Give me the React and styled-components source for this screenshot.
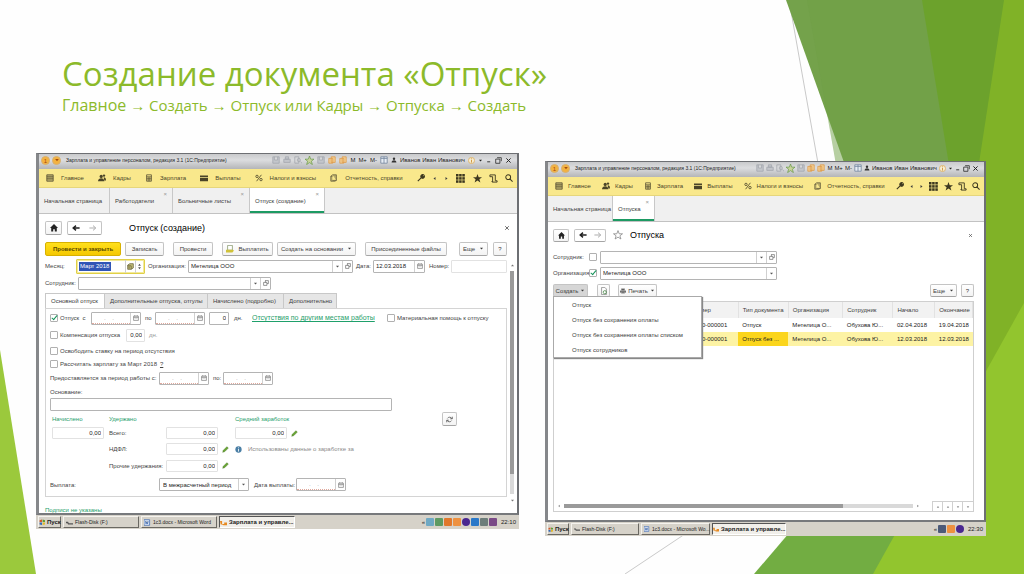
import React from "react";
import styled, { createGlobalStyle, css } from "styled-components";

const Global = createGlobalStyle`
  *, *::before, *::after { box-sizing: border-box; }
  html, body { margin: 0; padding: 0; background: #fff; }
  body { font-family: "Liberation Sans", Arial, sans-serif; }
  button, input, select { font: inherit; color: inherit; margin: 0; padding: 0; border: 0; background: none; border-radius: 0; outline: 0; }
`;

/* ---------- slide ---------- */
const Slide = styled.main`
  position: relative;
  min-height: 100vh;
  overflow: hidden;
  background: #fefefe;
`;
const Backdrop = styled.svg`
  position: absolute;
  inset: 0;
  width: 100%;
  height: 100%;
`;
const Header = styled.header`
  position: relative;
  height: 153px;
  padding: 54px 0 0 62px;
  color: #8cba2a;
  font-family: "Open Sans", "Noto Sans", sans-serif;
  white-space: nowrap;
`;
const Title = styled.h1`
  margin: 0;
  font-size: 33px;
  line-height: 40px;
  font-weight: 400;
`;
const Subtitle = styled.p`
  margin: 0;
  font-size: 15px;
  line-height: 22px;
`;
const Lead = styled.span`
  font-size: 16px;
`;
const Shots = styled.div`
  position: relative;
  display: flex;
  align-items: flex-start;
  gap: 26px;
  padding: 0 38px 0 36px;
`;

/* ---------- application window ---------- */
const Shot = styled.section`
  flex: ${(p) => p.$grow} 1 0;
  min-width: 0;
  margin-top: ${(p) => p.$drop || 0}px;
  font-size: 6px;
  line-height: 8px;
  color: #3c3c3c;
  white-space: nowrap;
`;
const Frame = styled.div`
  border: 1px solid #6d6f73;
  border-left: 3px solid #85878a;
  border-right: 2px solid #6d6f73;
  border-bottom: 2px solid #77797c;
  background: #fff;
`;
const TitleBar = styled.div`
  display: flex;
  align-items: center;
  height: 15px;
  padding: 0 5px 3px 2px;
  background: linear-gradient(#c9cacc, #dcdddf 40%, #b4b5b8);
  color: #222;
`;
const Caption = styled.span`
  flex: 1;
  min-width: 0;
  margin-left: 3px;
  font-size: 5px;
`;
const Disc = styled.span`
  display: grid;
  place-items: center;
  width: 9px;
  height: 9px;
  margin-right: 2px;
  border-radius: 50%;
  background: #f3b23f;
  border: 1px solid #d8b070;
  color: #a34a10;
`;
const Tools = styled.div`
  display: flex;
  align-items: center;
  gap: ${(p) => p.$gap}px;
  flex: none;
`;
const NavBar = styled.nav`
  display: flex;
  align-items: center;
  gap: ${(p) => p.$gap}px;
  height: 19px;
  padding: 0 4px 0 7px;
  background: #f9e88c;
  border-bottom: 1px solid #e6d67c;
`;
const NavItem = styled.a`
  display: flex;
  align-items: center;
  gap: ${(p) => p.$gap}px;
  color: #4b4529;
  text-decoration: none;
`;
const NavTools = styled.div`
  display: flex;
  flex: 1;
  align-items: center;
  justify-content: space-between;
`;
const TabBar = styled.div`
  display: flex;
  height: 26px;
  background: #f0f0f0;
  border-bottom: 1px solid #c2c2c2;
`;
const Tab = styled.button`
  position: relative;
  width: ${(p) => p.$w}px;
  padding-left: 5px;
  text-align: left;
  border-right: 1px solid #c8c8c8;
  ${(p) =>
    p.$active &&
    css`
      background: #fff;
      box-shadow: inset 0 -2px #1d9a63;
    `}
`;
const TabClose = styled.span`
  position: absolute;
  top: 3px;
  right: 5px;
  line-height: 6px;
  color: #999;
`;
const Body = styled.div`
  display: flex;
  flex-direction: column;
  height: ${(p) => p.$h}px;
  padding: ${(p) => p.$pad};
  overflow: hidden;
`;
const Row = styled.div`
  display: flex;
  align-items: center;
  height: ${(p) => p.$h}px;
  flex: none;
`;
const Heading = styled.h2`
  margin: 0;
  flex: 1;
  padding-left: ${(p) => p.$indent}px;
  font-size: 9px;
  line-height: 12px;
  font-weight: 400;
  color: #000;
`;
const Button = styled.button`
  display: flex;
  flex: none;
  align-items: center;
  justify-content: center;
  gap: ${(p) => p.$gap || 4}px;
  width: ${(p) => p.$w}px;
  height: ${(p) => p.$h || 14}px;
  margin-right: ${(p) => p.$after || 0}px;
  border: 1px solid #c4c4c4;
  border-bottom-color: #a5a5a5;
  border-radius: 2px;
  background: ${(p) => (p.$pressed ? "#d6d6d6" : "linear-gradient(#fff, #f3f3f3)")};
  ${(p) =>
    p.$primary &&
    css`
      background: linear-gradient(#ffe01d, #f5c800);
      border-color: #d8b100;
      color: #5b4a00;
      font-weight: 700;
    `}
`;
const Split = styled.div`
  display: flex;
  width: ${(p) => p.$w}px;
  height: ${(p) => p.$h || 14}px;
  border: 1px solid #c4c4c4;
  border-bottom-color: #a5a5a5;
  border-radius: 2px;
  margin-left: 5px;
`;
const SplitButton = styled.button`
  flex: 1;
  display: grid;
  place-items: center;
  color: ${(p) => (p.$dim ? "#aaa" : "#222")};
`;
const Ghost = styled.button`
  display: grid;
  place-items: center;
  width: 8px;
  height: 8px;
  margin-right: ${(p) => p.$after || 0}px;
  color: #555;
`;
const Spacer = styled.span`
  flex: 1;
`;
const Label = styled.label`
  flex: none;
  width: ${(p) => p.$w}px;
  padding-left: ${(p) => p.$in || 0}px;
  color: #444;
`;
const Text = styled.span`
  flex: none;
  width: ${(p) => p.$w}px;
  padding-left: ${(p) => p.$in || 0}px;
  color: ${(p) => p.$color || "#444"};
`;
const Box = styled.span`
  display: flex;
  flex: ${(p) => (p.$grow ? "1 1 0" : "none")};
  min-width: 0;
  width: ${(p) => p.$w}px;
  height: ${(p) => p.$h || 13}px;
  border: 1px solid ${(p) => (p.$soft ? "#e2e2e2" : "#b4b4b4")};
  border-radius: 1px;
  background: #fff;
  ${(p) =>
    p.$focus &&
    css`
      border-color: #e0d048;
      box-shadow: inset 0 0 0 1px #f3ea9a;
    `}
`;
const Input = styled.input`
  flex: 1;
  width: 0;
  min-width: 0;
  padding: 0 2px;
  text-align: ${(p) => (p.$right ? "right" : "left")};
  color: #222;
  ${(p) =>
    p.$required &&
    css`
      padding-left: 12px;
      border-bottom: 1px dotted #e0a89c;
      color: #999;
    `}
`;
const Selected = styled.input`
  width: 32px;
  height: 9px;
  margin: 2px 14px 0 2px;
  padding: 0 1px;
  background: #2f55b5;
  color: #fff;
`;
const Adorn = styled.button`
  display: grid;
  place-items: center;
  width: 10px;
  color: #555;
  border-left: 1px solid #d0d0d0;
`;
const Select = styled.select`
  flex: 1;
  min-width: 0;
  padding-left: 3px;
  appearance: none;
  color: #222;
`;
const Check = styled.input`
  appearance: none;
  display: grid;
  flex: none;
  width: 8px;
  height: 8px;
  margin-right: ${(p) => p.$after || 2}px;
  border: 1px solid #b0b0b0;
  border-radius: 1px;
  background: #fff;
  &:checked::after {
    content: "";
    width: 3px;
    height: 6px;
    margin: -1px 0 0 2px;
    border: solid #15935a;
    border-width: 0 1px 1px 0;
    transform: rotate(40deg);
  }
`;
const InnerTabs = styled.div`
  display: flex;
  flex: none;
  height: 15px;
`;
const InnerTab = styled.button`
  width: ${(p) => p.$w}px;
  padding-left: 5px;
  text-align: left;
  border: 1px solid #c8c8c8;
  border-left-width: ${(p) => (p.$active ? 1 : 0)}px;
  border-bottom-width: 0;
  background: ${(p) => (p.$active ? "#fff" : "#e6e6e6")};
`;
const Panel = styled.div`
  flex: none;
  height: 189px;
  padding: 2px 0 0 4px;
  border: 1px solid #d4d4d4;
`;
const Link = styled.a`
  flex: none;
  width: ${(p) => p.$w}px;
  color: #1fa06b;
  font-size: ${(p) => p.$size || 6}px;
`;
const FormArea = styled.div`
  display: flex;
  flex: none;
`;
const FormMain = styled.div`
  flex: 1;
  min-width: 0;
`;
const Scroll = styled.div`
  display: flex;
  flex-direction: column;
  align-items: center;
  width: 10px;
  padding-top: 5px;
  color: #777;
`;
const Thumb = styled.div`
  width: 4px;
  height: 203px;
  margin-top: 3px;
  background: #9a9a9a;
`;
const Track = styled.div`
  width: 4px;
  height: 20px;
  margin-bottom: 4px;
  background: #d9d9d9;
`;

/* ---------- journal ---------- */
const Anchor = styled.div`
  position: relative;
`;
const Menu = styled.div`
  position: absolute;
  z-index: 2;
  top: 12px;
  left: 0;
  width: 149px;
  background: #fff;
  border: 1px solid #aaa;
  box-shadow: 1px 1px 1px #888;
`;
const MenuItem = styled.button`
  display: block;
  width: 100%;
  height: 15px;
  padding-left: 18px;
  text-align: left;
`;
const Journal = styled.div`
  display: flex;
  flex: 1;
  flex-direction: column;
  min-height: 0;
  border: 1px solid #cfcfcf;
`;
const Table = styled.table`
  width: 100%;
  table-layout: fixed;
  border-collapse: collapse;
`;
const Th = styled.th`
  width: ${(p) => p.$w};
  height: 16px;
  padding: 0 0 0 4px;
  text-align: left;
  font-weight: 400;
  background: #f2f2f2;
  border-right: 1px solid #e2e2e2;
`;
const Td = styled.td`
  height: 14px;
  padding: 0 0 0 4px;
  color: #222;
  background: ${(p) => (p.$current ? "#fbd51c" : p.$marked ? "#fdf3a4" : "#fff")};
`;
const HScroll = styled.div`
  display: flex;
  align-items: center;
  height: 10px;
  margin-top: auto;
  padding-left: 3px;
  gap: 3px;
  color: #888;
`;
const HTrack = styled.div`
  flex: 1;
  height: 4px;
  background: #d9d9d9;
`;
const HThumb = styled.div`
  width: 80%;
  height: 4px;
  background: #9a9a9a;
`;
const Pager = styled.div`
  display: flex;
  width: 41px;
  height: 10px;
  margin-left: 9px;
  border-top: 1px solid #cfcfcf;
`;

/* ---------- taskbar ---------- */
const TaskBar = styled.div`
  display: flex;
  align-items: center;
  height: 14px;
  gap: 2px;
  padding: 0 2px;
  background: #d6d2c9;
  color: #222;
`;
const Task = styled.button`
  display: flex;
  align-items: center;
  gap: 2px;
  flex: none;
  width: ${(p) => p.$w}px;
  height: 12px;
  padding-left: ${(p) => p.$in || 0}px;
  background: ${(p) => (p.$active ? "#f1efea" : "#d6d2c9")};
  border: 1px solid;
  border-color: ${(p) => (p.$active ? "#555 #fff #fff #555" : "#f5f3ee #6a6862 #6a6862 #f5f3ee")};
  font-size: ${(p) => (p.$bold ? 6 : 5)}px;
  font-weight: ${(p) => (p.$bold ? 700 : 400)};
`;
const Tray = styled.div`
  display: flex;
  align-items: center;
  gap: 1px;
  margin-left: auto;
`;
const Dot = styled.i`
  width: 8px;
  height: 8px;
  border-radius: ${(p) => (p.$round ? 4 : 1)}px;
  background: ${(p) => p.$c};
`;
const Clock = styled.time`
  margin: 0 1px 0 3px;
`;

/* ---------- drawings ---------- */
const art = {
  menu: <path d="M1 1h8v8H1zM1 3.500h8M1 6h8" fill="#b9ad6c" stroke="#5a5335" />,
  people: (
    <g fill="#4a4428">
      <circle cx="4" cy="3" r="2" />
      <path d="M0 9c0-5 8-5 8 0z" />
      <circle cx="7.500" cy="2" r="1.500" />
      <path d="M7 4c2.500 0 3 2 3 4H8z" />
    </g>
  ),
  calc: <path d="M2 1h6v8H2zM2 3.500h6M4 4v5M6 4v5M2 6h6" fill="none" stroke="#5a5335" />,
  wallet: <path d="M0 2h10v2H0zM0 5h10v4H0z" fill="#4a4428" />,
  percent: (
    <g fill="none" stroke="#4a4428">
      <circle cx="2.500" cy="3" r="1.500" />
      <circle cx="7.500" cy="7" r="1.500" />
      <path d="M8 1 2 9" />
    </g>
  ),
  report: <path d="M3 1h5v7H3M3 1 1 3v6h5l2-1M1 3h2" fill="#b9ad6c" stroke="#6b6340" />,
  wrench: <path d="M1 9 5.500 4.500M5 4a2.300 2.300 0 0 1 3-3L6.500 2.500 8 4l1.200-1.500A2.300 2.300 0 0 1 6 5z" fill="#3d3820" stroke="#3d3820" strokeWidth="1.400" />,
  grid: (
    <g fill="#3d3820">
      {[0, 3.5, 7].map((y) => [0, 3.5, 7].map((x) => <rect key={`${x}-${y}`} x={x} y={y} width="2.800" height="2.800" />))}
    </g>
  ),
  star: <path d="M5 0l1.300 3.500H10L7.100 5.800 8.200 9.500 5 7.300 1.800 9.500 2.900 5.800 0 3.500h3.700z" fill="#3d3820" />,
  starLine: <path d="M5 .6l1.200 3.200h3.300L6.900 5.800l1 3.200L5 7.100 2.100 9l1-3.200L.5 3.800h3.300z" fill="none" stroke="#888" strokeWidth=".8" />,
  scroll: <path d="M1 1h6v6.500h2V9H4V3H1zM4 9c-1 0-1-1-1-1" fill="none" stroke="#3d3820" />,
  search: (
    <g fill="none" stroke="#3d3820" strokeWidth="1.300">
      <circle cx="4" cy="4" r="3" />
      <path d="M6 6l3.500 3.500" />
    </g>
  ),
  home: <path d="M5 0l5 5H8.500v4.500h-2.500V6.500H4v3H1.500V5H0z" fill="#222" />,
  back: <path d="M9.500 5H2M5 2 1.500 5 5 8" fill="none" stroke="currentColor" strokeWidth="1.800" />,
  forward: <path d="M.5 5H8M5 2l3.500 3L5 8" fill="none" stroke="currentColor" strokeWidth="1.200" />,
  close: <path d="M2 2l6 6M8 2 2 8" stroke="currentColor" strokeWidth="1.400" />,
  down: <path d="M2 3.500h6L5 7z" fill="currentColor" />,
  up: <path d="M2 6.500h6L5 3z" fill="currentColor" />,
  left: <path d="M7 2v6L3 5z" fill="currentColor" />,
  right: <path d="M3 2v6l4-3z" fill="currentColor" />,
  step: <path d="M3 4h4L5 1zM3 6h4L5 9z" fill="currentColor" />,
  open: <path d="M3.500 1H9v5H6.500M1 4h5.500v5H1zM4 4V1" fill="none" stroke="currentColor" />,
  cal: <path d="M1 2h8v7H1zM1 4h8M3 6h1M6 6h1M3 0v2M7 0v2" fill="none" stroke="#666" />,
  book: <path d="M1 3l3-2h5v6L6 9H1zM1 4h5v5M3 5v3" fill="#c4bf7a" stroke="#5c572e" />,
  pencil: <path d="M1 9l1-3 5-5 2 2-5 5z" fill="#67a530" stroke="#3f6d1c" strokeWidth=".6" />,
  info: (
    <g>
      <circle cx="5" cy="5" r="4.500" fill="#4a7fa5" />
      <path d="M5 4v4M5 2v1" stroke="#fff" strokeWidth="1.200" />
    </g>
  ),
  about: (
    <g>
      <circle cx="5" cy="5" r="4.400" fill="#f6edd2" stroke="#dba64e" />
      <path d="M5 4v4M5 2v1" stroke="#c98a2c" strokeWidth="1.200" />
    </g>
  ),
  refresh: <path d="M8.500 4A3.600 3.600 0 0 0 2 3.500M1.500 6A3.600 3.600 0 0 0 8 6.500M9 1v3H6M1 9V6h3" fill="none" stroke="#444" />,
  printer: <path d="M2 1h6v3H2zM0 4h10v4H0zM2 6h6v3H2z" fill="#555" stroke="#fff" strokeWidth=".4" />,
  doc: (
    <g>
      <path d="M2 .5h4l2 2v7H2z" fill="#fff" stroke="#888" />
      <circle cx="6" cy="6.500" r="2" fill="none" stroke="#4d8d4d" />
    </g>
  ),
  pay: (
    <g>
      <path d="M2 .5h6v6H2z" fill="#fff" stroke="#8a9a70" />
      <path d="M0 6h8l2 1-2 2.500H0z" fill="#d0c23a" />
    </g>
  ),
  sheet: <path d="M1 1h8v8H1zM5 1v8M1 3h8" fill="#e7edf4" stroke="#71849c" />,
  grey: <path d="M1 1h8v8H1zM3 1v4h4V1" fill="#c3c6cb" stroke="#a3a7ad" />,
  print: <path d="M3 1h4v3H3zM1 4h8v4H1z" fill="#c3c6cb" stroke="#a3a7ad" />,
  lens: (
    <g fill="none" stroke="#a3a7ad">
      <path d="M1 1h5v8H1z" />
      <circle cx="6" cy="5" r="2" />
      <path d="M8 7l2 2" />
    </g>
  ),
  fav: <path d="M5 0l1.300 3.500H10L7.100 5.800 8.200 9.500 5 7.300 1.800 9.500 2.900 5.800 0 3.500h3.700z" fill="#c9d39a" stroke="#6b9a4b" strokeWidth=".8" />,
  orange: <path d="M1 3h5v6H1zM4 1h5v7H4z" fill="#f3cf92" stroke="#dd9a4b" />,
  user: (
    <g fill="#333">
      <circle cx="5" cy="3" r="2" />
      <path d="M1 9c0-5 8-5 8 0z" />
    </g>
  ),
  min: <path d="M2 8h5" stroke="#333" strokeWidth="1.600" />,
  max: <path d="M3 1h6v5M1 3h6v6H1z" fill="none" stroke="#333" strokeWidth="1.200" />,
  win: (
    <g>
      <path d="M1 2l4-1v4H1z" fill="#d4582a" />
      <path d="M6 1l4 1v3H6z" fill="#5d9d34" />
      <path d="M1 6h4v4l-4-1z" fill="#3769b5" />
      <path d="M6 6h4v3l-4 1z" fill="#e2b92c" />
    </g>
  ),
  drive: <path d="M0 4h3l1 2h6v2H3L2 6H0z" fill="#555" />,
  word: <path d="M0 1h8v8H0zM2 3l1 4 1-3 1 3 1-4" fill="#dbe6f7" stroke="#3965ae" />,
  onec: <path d="M0 3h3v4h3V5h4v4H5L3 8H1z" fill="#e78a22" />,
};
const Svg = styled.svg`
  flex: none;
  display: block;
`;
const Icon = ({ name, s = 8 }) => (
  <Svg width={s} height={s} viewBox="0 0 10 10" aria-hidden="true">
    {art[name]}
  </Svg>
);

const sections = [
  ["menu", "Главное"],
  ["people", "Кадры"],
  ["calc", "Зарплата"],
  ["wallet", "Выплаты"],
  ["percent", "Налоги и взносы"],
  ["report", "Отчетность, справки"],
];

function Chrome({ gap, iconGap, toolGap, tabs }) {
  return (
    <>
      <TitleBar>
        <Disc>1</Disc>
        <Disc>
          <Icon name="down" s={6} />
        </Disc>
        <Caption>Зарплата и управление персоналом, редакция 3.1 (1С:Предприятие)</Caption>
        <Tools $gap={toolGap}>
          <Icon name="grey" />
          <Icon name="print" />
          <Icon name="lens" />
          <Icon name="fav" s={9} />
          <Icon name="grey" />
          <Icon name="orange" />
          <Icon name="orange" />
          <span>M</span>
          <span>M+</span>
          <span>M-</span>
          <Icon name="sheet" />
          <Icon name="user" s={6} />
          <span>Иванов Иван Иванович</span>
          <Icon name="about" s={7} />
          <Icon name="down" s={5} />
          <Icon name="min" s={6} />
          <Icon name="max" s={7} />
          <Icon name="close" s={7} />
        </Tools>
      </TitleBar>
      <NavBar $gap={gap}>
        {sections.map(([icon, name]) => (
          <NavItem key={name} href="#" $gap={iconGap}>
            <Icon name={icon} />
            {name}
          </NavItem>
        ))}
        <NavTools>
          <Icon name="wrench" />
          <Icon name="left" s={5} />
          <Icon name="right" s={5} />
          <Icon name="grid" s={9} />
          <Icon name="star" s={9} />
          <Icon name="scroll" s={9} />
          <Icon name="search" />
        </NavTools>
      </NavBar>
      <TabBar>
        {tabs.map(([name, w, closable, active]) => (
          <Tab key={name} $w={w} $active={active}>
            {name}
            {closable && <TabClose>×</TabClose>}
          </Tab>
        ))}
      </TabBar>
    </>
  );
}

const Arrows = ({ w, h }) => (
  <Split $w={w} $h={h}>
    <SplitButton aria-label="Назад">
      <Icon name="back" />
    </SplitButton>
    <SplitButton $dim aria-label="Вперед">
      <Icon name="forward" />
    </SplitButton>
  </Split>
);

function Field({ id, label, value = "", icons = [], right, required, ...box }) {
  return (
    <Box {...box}>
      <Input id={id} aria-label={label} defaultValue={value} $right={right} $required={required} />
      {icons.map((n) => (
        <Adorn key={n} aria-label={n === "cal" ? "Календарь" : n === "down" ? "Список" : "Открыть"}>
          <Icon name={n} s={n === "down" ? 5 : 6} />
        </Adorn>
      ))}
    </Box>
  );
}
const DateField = ({ id, label }) => (
  <Field id={id} label={label} value=".    ." required icons={["cal"]} $w={50} />
);

function VacationForm() {
  return (
    <Shot $grow={483}>
      <Frame>
        <Chrome
          gap={14}
          iconGap={7}
          toolGap={3}
          tabs={[
            ["Начальная страница", 71],
            ["Работодатели", 63, true],
            ["Больничные листы", 77, true],
            ["Отпуск (создание)", 75, true, true],
          ]}
        />
        <Body $h={299} $pad="6px 0 0 6px">
          <Row $h={15}>
            <Button $w={17} aria-label="Домой">
              <Icon name="home" />
            </Button>
            <Arrows w={35} />
            <Heading $indent={27}>Отпуск (создание)</Heading>
            <Ghost $after={6} aria-label="Закрыть">
              <Icon name="close" s={6} />
            </Ghost>
          </Row>
          <Row $h={4} />
          <Row $h={19}>
            <Button $primary $w={76} $after={4}>Провести и закрыть</Button>
            <Button $w={39} $after={9}>Записать</Button>
            <Button $w={40} $after={9}>Провести</Button>
            <Button $w={51} $after={4}>
              <Icon name="pay" />
              Выплатить
            </Button>
            <Button $w={79} $after={9}>
              Создать на основании <Icon name="down" s={5} />
            </Button>
            <Button $w={82}>Присоединенные файлы</Button>
            <Spacer />
            <Button $w={29} $after={5}>
              Еще <Icon name="down" s={5} />
            </Button>
            <Button $w={14} $after={10}>?</Button>
          </Row>
          <FormArea>
            <FormMain>
              <Row $h={16}>
                <Label htmlFor="month" $w={31}>Месяц:</Label>
                <Box $w={69} $h={15} $focus>
                  <Selected id="month" defaultValue="Март 2018" />
                  <Adorn aria-label="Выбрать">
                    <Icon name="book" s={7} />
                  </Adorn>
                  <Adorn aria-label="Изменить">
                    <Icon name="step" s={7} />
                  </Adorn>
                </Box>
                <Label htmlFor="org" $w={43} $in={3}>Организация:</Label>
                <Field id="org" value="Метелица ООО" icons={["down", "open"]} $grow />
                <Label htmlFor="date" $w={20} $in={3}>Дата:</Label>
                <Field id="date" value="12.03.2018" icons={["cal"]} $w={52} />
                <Label htmlFor="num" $w={26} $in={4}>Номер:</Label>
                <Field id="num" $w={56} $soft />
              </Row>
              <Row $h={18}>
                <Label htmlFor="emp" $w={33}>Сотрудник:</Label>
                <Field id="emp" icons={["down", "open"]} $w={193} />
              </Row>
              <Row $h={1} />
              <InnerTabs>
                <InnerTab $w={60} $active>Основной отпуск</InnerTab>
                <InnerTab $w={103}>Дополнительные отпуска, отгулы</InnerTab>
                <InnerTab $w={76}>Начислено (подробно)</InnerTab>
                <InnerTab $w={53}>Дополнительно</InnerTab>
              </InnerTabs>
              <Panel>
                <Row $h={14}>
                  <Check type="checkbox" id="leave" defaultChecked />
                  <Label htmlFor="leave" $w={31}>Отпуск&nbsp; с</Label>
                  <DateField label="Отпуск с" />
                  <Text $w={14} $in={4}>по</Text>
                  <DateField label="Отпуск по" />
                  <Text $w={4} />
                  <Field label="Дней" value="0" right $w={20} />
                  <Text $w={23} $in={5}>дн.</Text>
                  <Link href="#" $w={135} $size={7}>Отсутствия по другим местам работы</Link>
                  <Check type="checkbox" id="help" />
                  <Label htmlFor="help">Материальная помощь к отпуску</Label>
                </Row>
                <Row $h={20}>
                  <Check type="checkbox" id="comp" />
                  <Label htmlFor="comp" $w={66}>Компенсация отпуска</Label>
                  <Field label="Дни компенсации" value="0,00" right $w={19} $soft />
                  <Text $in={4} $color="#999">дн.</Text>
                </Row>
                <Row $h={11}>
                  <Check type="checkbox" id="rate" />
                  <Label htmlFor="rate">Освободить ставку на период отсутствия</Label>
                </Row>
                <Row $h={15}>
                  <Check type="checkbox" id="salary" />
                  <Label htmlFor="salary">Рассчитать зарплату за Март 2018</Label>
                  <Text $in={3}><u>?</u></Text>
                </Row>
                <Row $h={14}>
                  <Label htmlFor="from" $w={109}>Предоставляется за период работы с:</Label>
                  <DateField id="from" />
                  <Text $w={14} $in={4}>по:</Text>
                  <DateField label="Период работы по" />
                </Row>
                <Row $h={13}>
                  <Label htmlFor="reason">Основание:</Label>
                </Row>
                <Row $h={13}>
                  <Field id="reason" $w={342} />
                </Row>
                <Row $h={16}>
                  <Text $in={2} $w={59} $color="#1fa06b">Начислено</Text>
                  <Text $w={126} $color="#1fa06b">Удержано</Text>
                  <Text $w={207} $color="#1fa06b">Средний заработок</Text>
                  <Button $w={15} aria-label="Обновить">
                    <Icon name="refresh" s={7} />
                  </Button>
                </Row>
                <Row $h={12}>
                  <Text $w={2} />
                  <Field label="Начислено" value="0,00" right $soft $w={52} $h={12} />
                  <Label htmlFor="total" $w={62} $in={5}>Всего:</Label>
                  <Field id="total" value="0,00" right $soft $w={52} $h={12} />
                  <Text $w={17} />
                  <Field label="Средний заработок" value="0,00" right $soft $w={52} $h={12} />
                  <Text $w={4} />
                  <Icon name="pencil" s={7} />
                </Row>
                <Row $h={20}>
                  <Label htmlFor="ndfl" $w={116} $in={59}>НДФЛ:</Label>
                  <Field id="ndfl" value="0,00" right $soft $w={52} $h={12} />
                  <Text $w={4} />
                  <Icon name="pencil" s={7} />
                  <Text $w={6} />
                  <Icon name="info" s={7} />
                  <Text $in={6} $color="#8a8a8a">Использованы данные о заработке за</Text>
                </Row>
                <Row $h={13}>
                  <Label htmlFor="other" $w={116} $in={59}>Прочие удержания:</Label>
                  <Field id="other" value="0,00" right $soft $w={52} $h={12} />
                  <Text $w={4} />
                  <Icon name="pencil" s={7} />
                </Row>
                <Row $h={25}>
                  <Label htmlFor="pay" $w={109}>Выплата:</Label>
                  <Box $w={90}>
                    <Select id="pay">
                      <option>В межрасчетный период</option>
                    </Select>
                    <Adorn as="span">
                      <Icon name="down" s={5} />
                    </Adorn>
                  </Box>
                  <Label htmlFor="paydate" $w={47} $in={5}>Дата выплаты:</Label>
                  <DateField id="paydate" />
                </Row>
              </Panel>
            </FormMain>
            <Scroll>
              <Icon name="up" s={5} />
              <Thumb />
              <Track />
              <Icon name="down" s={5} />
            </Scroll>
          </FormArea>
          <Row $h={14}>
            <Link href="#">Подписи не указаны</Link>
          </Row>
        </Body>
      </Frame>
      <TaskBar>
        <Task $w={23} $bold>
          <Icon name="win" s={6} />
          Пуск
        </Task>
        <Task $w={76} $in={2}>
          <Icon name="drive" s={7} />
          Flash-Disk (F:)
        </Task>
        <Task $w={76} $in={2}>
          <Icon name="word" s={7} />
          1c3.docx - Microsoft Word
        </Task>
        <Task $w={76} $active $bold>
          <Icon name="onec" s={7} />
          Зарплата и управле...
        </Task>
        <Tray>
          «
          {["#6fa9c4", "#5f9a62", "#e0782c", "#ee9140", "#4a2790", "#2a78c8", "#6d7d7a", "#7a4a86"].map((c, i) => (
            <Dot key={c} $c={c} $round={i === 4} />
          ))}
          <Clock>22:10</Clock>
        </Tray>
      </TaskBar>
    </Shot>
  );
}

const rows = [
  ["", "0000-000001", "Отпуск", "Метелица О...", "Обухова Ю...", "02.04.2018", "19.04.2018"],
  ["", "0000-000001", "Отпуск без ...", "Метелица О...", "Обухова Ю...", "12.03.2018", "12.03.2018"],
];
const columns = [
  ["", "32%"],
  ["Номер", "12%"],
  ["Тип документа", "12%"],
  ["Организация", "13%"],
  ["Сотрудник", "12%"],
  ["Начало", "10%"],
  ["Окончание", "9%"],
];

function VacationJournal() {
  return (
    <Shot $grow={441} $drop={8}>
      <Frame>
        <Chrome
          gap={11}
          iconGap={5}
          toolGap={2}
          tabs={[
            ["Начальная страница", 65],
            ["Отпуска", 42, true, true],
          ]}
        />
        <Body $h={298} $pad="6px 10px 8px 5px">
          <Row $h={14}>
            <Button $w={16} $h={13} aria-label="Домой">
              <Icon name="home" s={7} />
            </Button>
            <Arrows w={32} h={13} />
            <Text $w={7} />
            <Icon name="starLine" s={10} />
            <Heading $indent={7}>Отпуска</Heading>
            <Ghost aria-label="Закрыть">
              <Icon name="close" s={5} />
            </Ghost>
          </Row>
          <Row $h={7} />
          <Row $h={16}>
            <Label htmlFor="jemp" $w={36}>Сотрудник:</Label>
            <Check type="checkbox" aria-label="Отбор по сотруднику" $after={3} />
            <Field id="jemp" icons={["down", "open"]} $w={177} />
          </Row>
          <Row $h={16}>
            <Label htmlFor="jorg" $w={36}>Организация:</Label>
            <Check type="checkbox" aria-label="Отбор по организации" defaultChecked $after={3} />
            <Field id="jorg" value="Метелица ООО" icons={["down"]} $w={177} />
          </Row>
          <Row $h={19}>
            <Anchor>
              <Button $w={35} $h={13} $after={9} $gap={2} $pressed>
                Создать <Icon name="down" s={5} />
              </Button>
              <Menu>
                <MenuItem>Отпуск</MenuItem>
                <MenuItem>Отпуск без сохранения оплаты</MenuItem>
                <MenuItem>Отпуск без сохранения оплаты списком</MenuItem>
                <MenuItem>Отпуск сотрудников</MenuItem>
              </Menu>
            </Anchor>
            <Button $w={13} $h={13} $after={8} aria-label="Найти">
              <Icon name="doc" s={8} />
            </Button>
            <Button $w={39} $h={13} $gap={2}>
              <Icon name="printer" s={6} />
              Печать <Icon name="down" s={5} />
            </Button>
            <Spacer />
            <Button $w={27} $h={13} $after={4}>
              Еще <Icon name="down" s={5} />
            </Button>
            <Button $w={13} $h={13}>?</Button>
          </Row>
          <Row $h={1} />
          <Journal>
            <Table>
              <thead>
                <tr>
                  {columns.map(([name, w]) => (
                    <Th key={w + name} $w={w}>
                      {name}
                    </Th>
                  ))}
                </tr>
              </thead>
              <tbody>
                {rows.map((r, i) => (
                  <tr key={i}>
                    {r.map((c, j) => (
                      <Td key={j} $marked={i === 1} $current={i === 1 && j === 2}>
                        {c}
                      </Td>
                    ))}
                  </tr>
                ))}
              </tbody>
            </Table>
            <HScroll>
              <Icon name="left" s={4} />
              <HTrack>
                <HThumb />
              </HTrack>
              <Icon name="right" s={4} />
              <Pager>
                {["up", "up", "down", "down"].map((n, i) => (
                  <Adorn key={i} aria-label={i < 2 ? "Выше" : "Ниже"}>
                    <Icon name={n} s={4} />
                  </Adorn>
                ))}
              </Pager>
            </HScroll>
          </Journal>
        </Body>
      </Frame>
      <TaskBar>
        <Task $w={22} $bold>
          <Icon name="win" s={5} />
          Пуск
        </Task>
        <Task $w={68} $in={2}>
          <Icon name="drive" s={6} />
          Flash-Disk (F:)
        </Task>
        <Task $w={69} $in={2}>
          <Icon name="word" s={6} />
          1c3.docx - Microsoft Wo...
        </Task>
        <Task $w={74} $active $bold>
          <Icon name="onec" s={6} />
          Зарплата и управле...
        </Task>
        <Tray>
          «
          {["#4c5a78", "#ee9140", "#4a2790"].map((c, i) => (
            <Dot key={c} $c={c} $round={i === 2} />
          ))}
          <Clock>22:30</Clock>
        </Tray>
      </TaskBar>
    </Shot>
  );
}

export default function App() {
  return (
    <Slide>
      <Global />
      <Backdrop viewBox="0 0 1024 574" preserveAspectRatio="none" aria-hidden="true">
        <path d="M789 0 891 574M625 574 1024 308" stroke="#c9c9c9" strokeWidth="1" />
        <path d="M943 0h81v574H771z" fill="#90c226" opacity=".05" />
        <path d="M786 0h238v574h-33z" fill="#74a24b" />
        <path d="M807 0h217v574H908z" fill="#6f9f45" opacity=".5" />
        <path d="M754 574 1024 258v316z" fill="#72ad42" />
        <path d="M922 0h102v574h-8z" fill="#6ca22c" />
        <path d="M1004 0h20v574H916z" fill="#84b527" opacity=".85" />
        <path d="M873 574 1024 303v271z" fill="#92c52e" />
        <path d="M0 350 36 574H0z" fill="#9bc93c" />
      </Backdrop>
      <Header>
        <Title>Создание документа «Отпуск»</Title>
        <Subtitle>
          <Lead>Главное</Lead> → Создать → Отпуск или Кадры → Отпуска → Создать
        </Subtitle>
      </Header>
      <Shots>
        <VacationForm />
        <VacationJournal />
      </Shots>
    </Slide>
  );
}
